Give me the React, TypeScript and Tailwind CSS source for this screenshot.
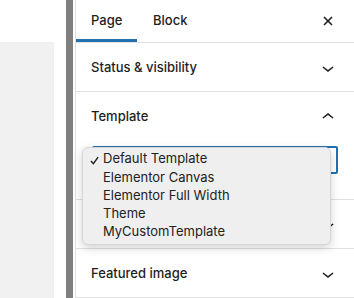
import React from "react";

const DOWN = "M17.5 11.6L12 16l-5.5-4.4.9-1.2L12 14l4.6-3.6 1 1.2z";
const UP = "M6.5 12.4L12 8l5.5 4.4-.9 1.2L12 10l-4.6 3.6-1-1.2z";

function Chevron({ up }: { up?: boolean }) {
  return (
    <svg viewBox="0 0 24 24" className="h-6 w-6 shrink-0" fill="#1e1e1e">
      <path d={up ? UP : DOWN} />
    </svg>
  );
}

function Section({ title, up, children }: { title?: string; up?: boolean; children?: React.ReactNode }) {
  return (
    <div className="border-b border-[#e0e0e0]">
      <div className="flex h-[48px] items-center justify-between pl-[15px] pr-[14px] pt-[2px] font-medium">
        <span>{title}</span>
        <Chevron up={up} />
      </div>
      {children}
    </div>
  );
}

const templates = ["Default Template", "Elementor Canvas", "Elementor Full Width", "Theme", "MyCustomTemplate"];

export default function App() {
  return (
    <div className="relative flex h-[298px] w-[354px] overflow-hidden bg-white font-['Inter',sans-serif] text-[13px] text-[#1e1e1e]">
      {/* editor canvas edge */}
      <div className="flex w-[66px] flex-col">
        <div className="h-[42px]" />
        <div className="w-[54px] flex-1 bg-[#f1f1f1]" />
      </div>
      <div className="w-[7px] bg-[#808080]" />
      <div className="w-[2px]" />

      {/* settings sidebar */}
      <div className="flex flex-1 flex-col border-l border-[#e0e0e0]">
        <div className="flex h-[44px] items-stretch border-b border-[#e0e0e0] font-medium">
          <div className="relative flex w-[61px] items-center pl-[15px]">
            Page
            <div className="absolute bottom-0 left-0 right-0 h-[3px] bg-[#2271b1]" />
          </div>
          <div className="flex items-center pl-4">Block</div>
          <div className="ml-auto flex items-center pr-[21px]">
            <svg viewBox="0 0 10 10" className="h-[10px] w-[10px]" stroke="#1e1e1e" strokeWidth="1.6">
              <path d="M1 1l8 8M9 1l-8 8" />
            </svg>
          </div>
        </div>

        <Section title="Status & visibility" />

        <Section title="Template" up>
          <div className="pl-4 pr-4 pt-[6px] pb-[25px]">
            <div className="flex h-[28px] items-center justify-end rounded-[2px] border-2 border-[#2271b1] pr-[4px]">
              <svg viewBox="0 0 24 24" className="h-[20px] w-[20px]" fill="#1e1e1e">
                <path d={DOWN} />
              </svg>
            </div>
          </div>
        </Section>

        <Section />

        <Section title="Featured image" />
      </div>

      {/* open native select menu */}
      <div className="absolute left-[82px] top-[147px] h-[98px] w-[249px] rounded-[6px] border border-[#d6d6d6] bg-[#efefef] pt-[2px] shadow-[0_3px_10px_rgba(0,0,0,0.18)]">
        {templates.map((t, i) => (
          <div key={t} className="flex h-[18.25px] items-center text-[13px] text-[#222]">
            <div className="flex w-[20px] justify-center pl-[3px] pt-[2px]">
              {i === 0 && (
                <svg viewBox="0 0 10 10" className="h-[9px] w-[9px]" fill="none" stroke="#222" strokeWidth="1.6">
                  <path d="M1 5.5l2.8 3L9 1.2" />
                </svg>
              )}
            </div>
            <span>{t}</span>
          </div>
        ))}
      </div>
    </div>
  );
}
